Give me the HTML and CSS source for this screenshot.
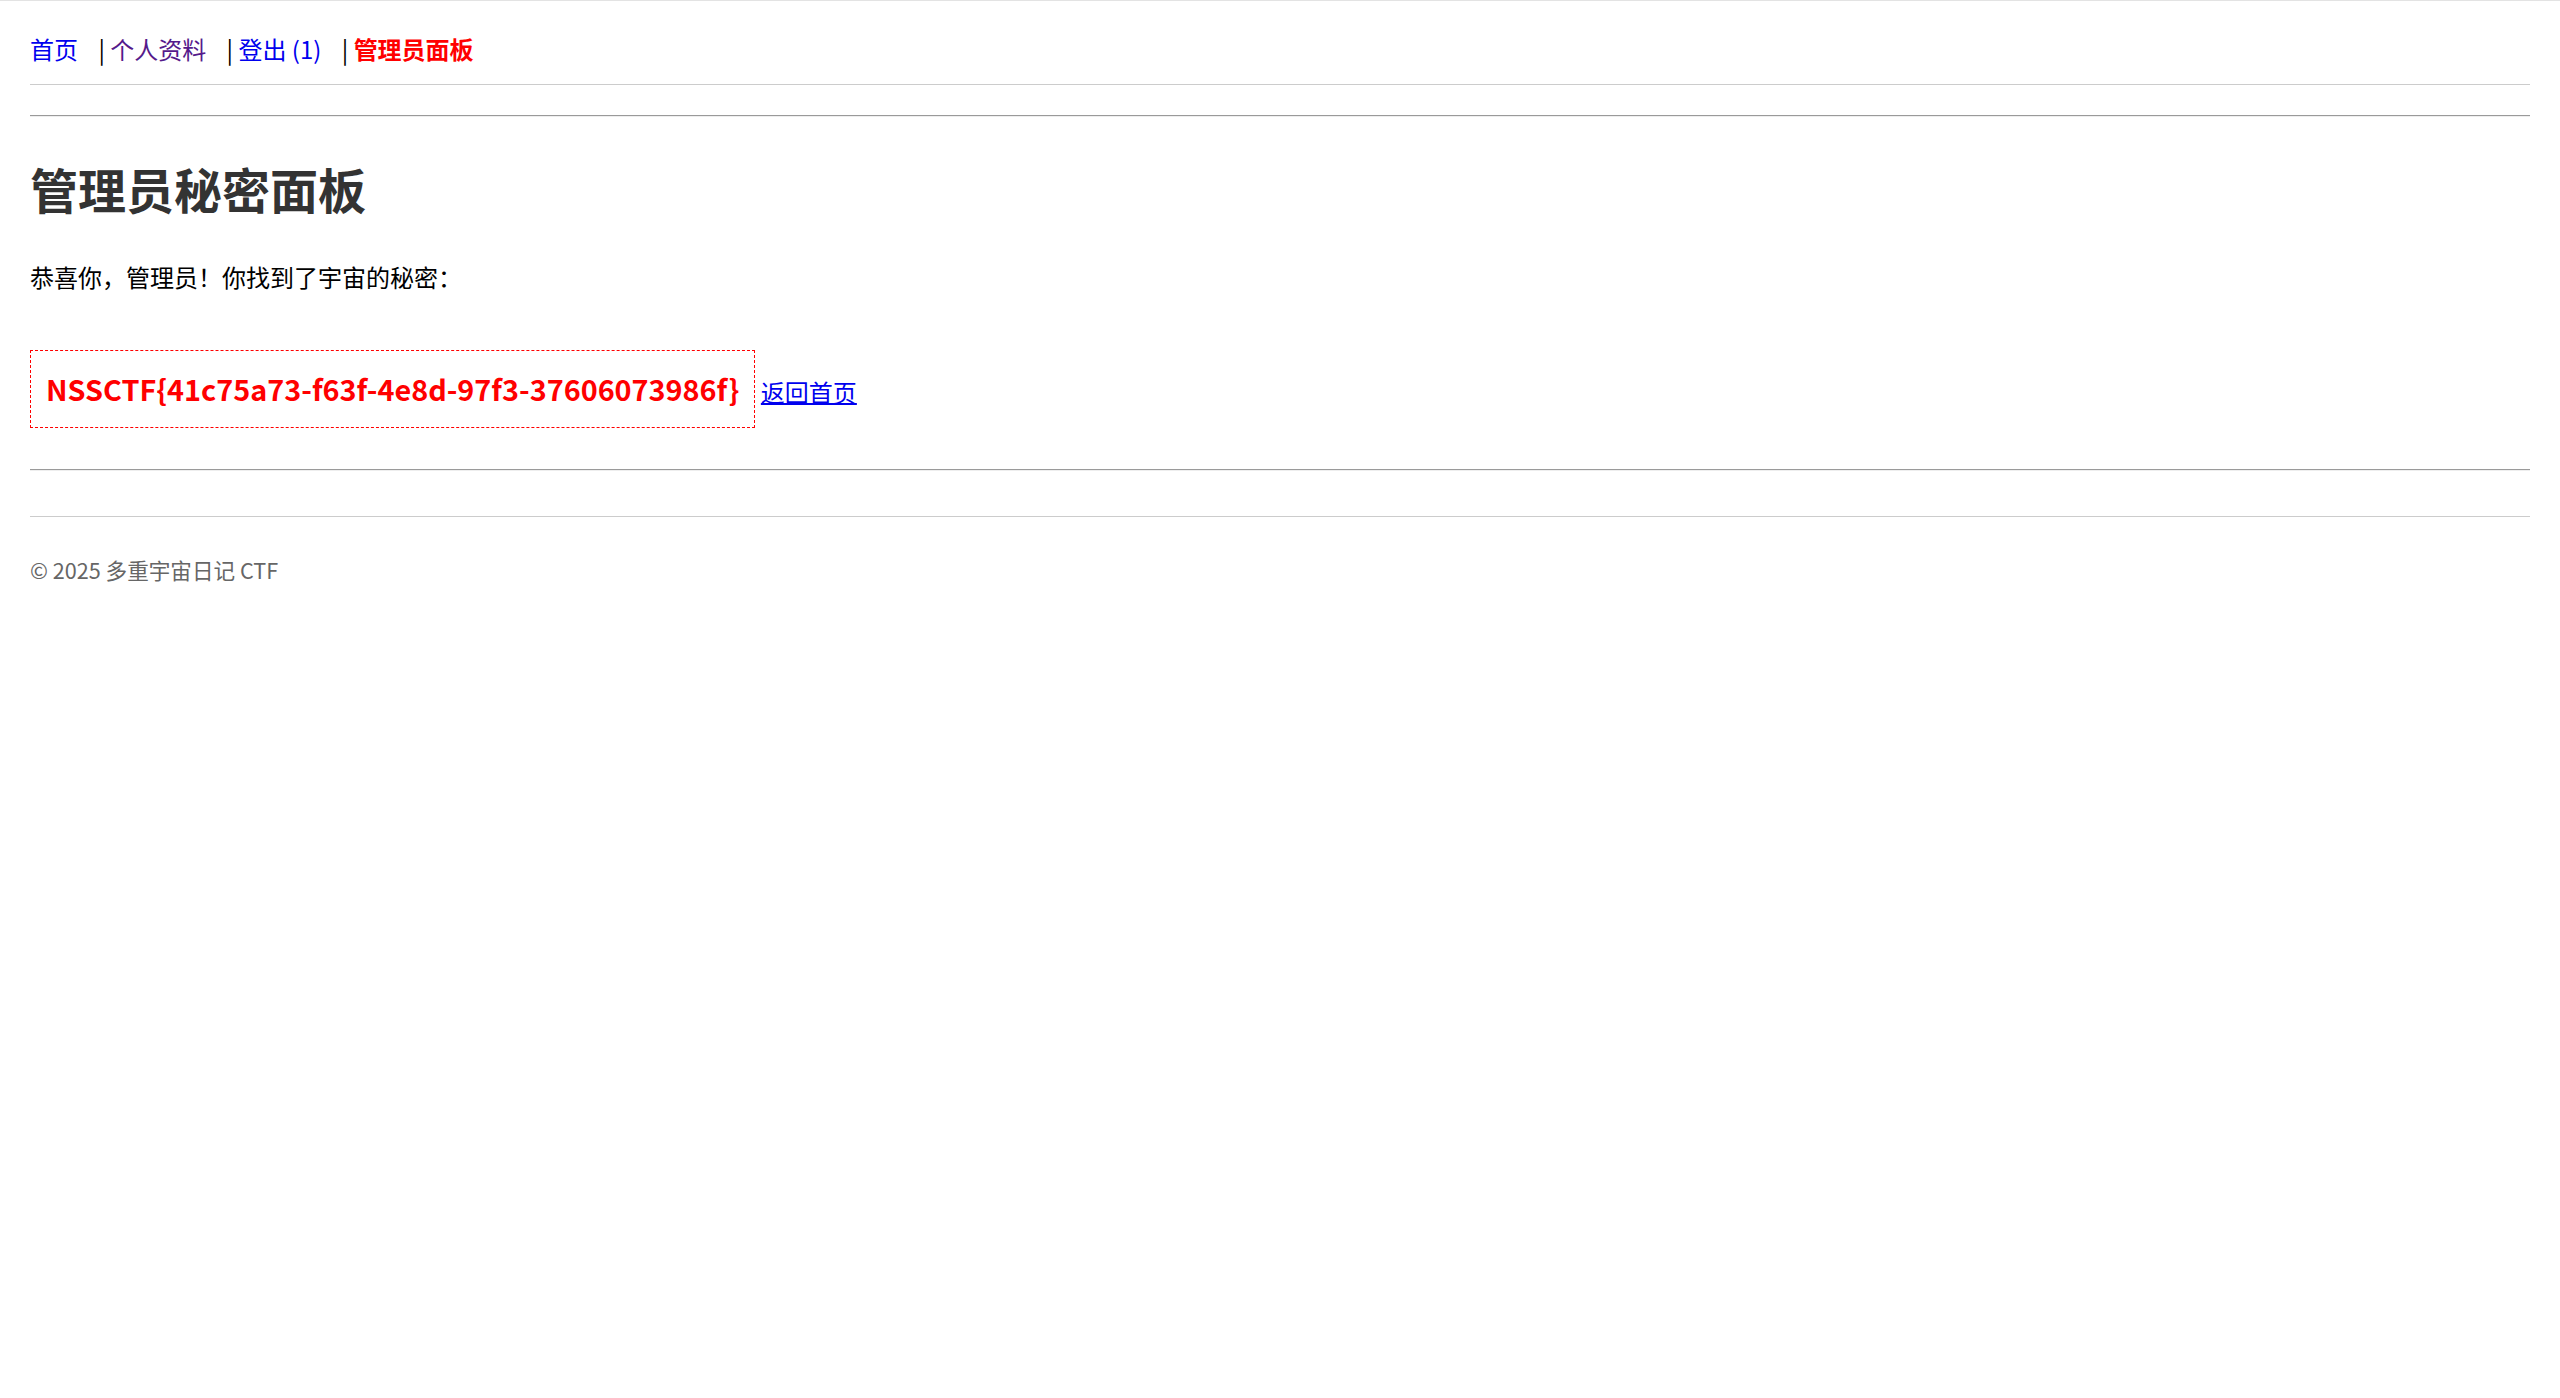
FILE: index.html
```html
<!DOCTYPE html>
<html lang="zh-CN">
<head>
<meta charset="utf-8">
<title>管理员面板 - 多重宇宙日记</title>
<link rel="stylesheet" href="styles.css">
</head>
<body>
<nav class="topnav"><a href="/">首页</a> | <a class="seen" href="/profile">个人资料</a> | <a href="/logout">登出 (1)</a> | <a class="admin" href="/admin">管理员面板</a></nav>
<hr class="rule">
<main class="content">
  <h1 class="title">管理员秘密面板</h1>
  <p class="lead">恭喜你，管理员！你找到了宇宙的秘密：</p>
  <div class="flag-row"><span class="flag">NSSCTF{41c75a73-f63f-4e8d-97f3-37606073986f}</span> <a class="back" href="/">返回首页</a></div>
</main>
<hr class="rule rule-bottom">
<footer class="footer">© 2025 多重宇宙日记 CTF</footer>
</body>
</html>
```

FILE: styles.css
```css
html {
  border-top: 1px solid #e3e3e3;
  background: #fff;
}

body {
  margin: 30px;
  font-family: "Noto Sans CJK SC", "Noto Sans", sans-serif;
  font-size: 24px;
  color: #000;
}

a {
  color: #0000ee;
}

.topnav {
  padding-bottom: 18px;
  border-bottom: 1px solid #cccccc;
  margin-bottom: 30px;
}

.topnav a {
  text-decoration: none;
  margin-right: 15px;
}

.topnav a.seen {
  color: #551a8b;
}

.topnav a.admin {
  color: #ff0000;
  font-weight: bold;
}

.rule {
  border: 0;
  border-top: 1px solid #9a9a9a;
  border-bottom: 1px solid #eeeeee;
  height: 0;
  margin: 0;
}

.title {
  font-size: 48px;
  color: #333333;
  margin: 36px 0 36px;
}

.lead {
  margin: 0 0 24px;
}

.flag-row {
  margin-top: 55.5px;
}

.flag {
  display: inline-block;
  color: #ff0000;
  font-weight: bold;
  font-size: 28.8px;
  padding: 17.5px 15px;
  border: 1px dashed #ff0000;
}

.rule-bottom {
  margin-top: 41px;
}

.footer {
  margin-top: 45px;
  padding-top: 37px;
  border-top: 1px solid #cccccc;
  font-size: 21.6px;
  color: #666666;
}
```
